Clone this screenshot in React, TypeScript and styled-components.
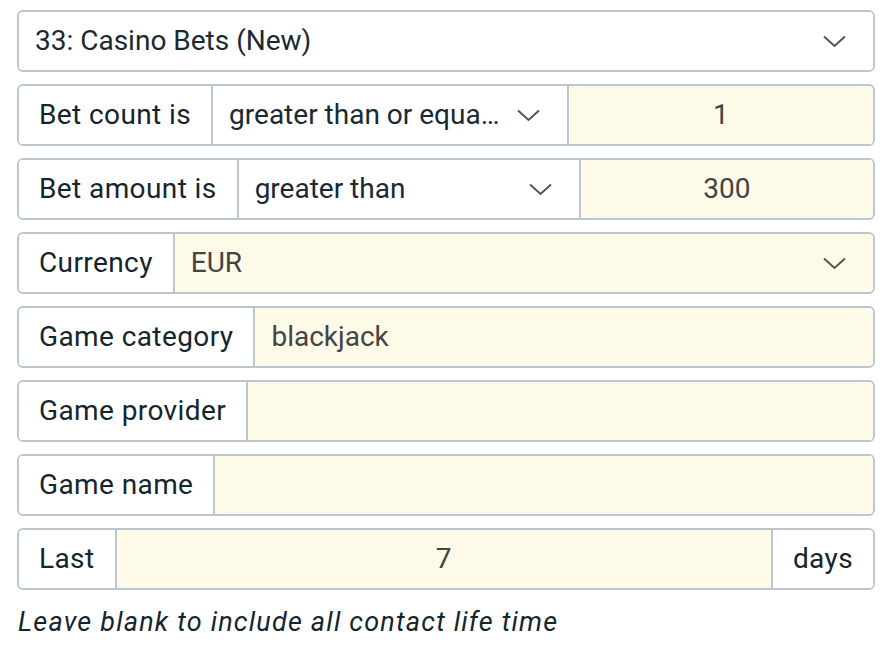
import React from "react";
import styled, { createGlobalStyle } from "styled-components";

const Global = createGlobalStyle`
  html, body { margin: 0; padding: 0; background: #fff; }
  body { font-family: Roboto, "Liberation Sans", sans-serif; }
  * { box-sizing: border-box; }
`;

const Page = styled.div`
  padding: 10px 15px 0 17px;
  display: flex;
  flex-direction: column;
  gap: 12px;
`;

const Row = styled.div`
  display: flex;
  height: 62px;
  border: 2px solid #bcc6ce;
  border-radius: 6px;
  overflow: hidden;
  font-size: 28px;
  line-height: 1.3;
`;

const Label = styled.div`
  flex: none;
  display: flex;
  align-items: center;
  padding: 0 20px;
  background: #fff;
  color: #15252e;
  letter-spacing: 0.4px;
  white-space: nowrap;
  border-right: 2px solid #bcc6ce;
`;

const Suffix = styled(Label)`
  border-right: none;
  border-left: 2px solid #bcc6ce;
`;

const Select = styled.div<{ $grow?: number; $fill?: boolean }>`
  flex: ${(p) => p.$grow ?? 1} 1 0;
  min-width: 0;
  display: flex;
  align-items: center;
  gap: 16px;
  padding: 0 27px 0 16px;
  background: ${(p) => (p.$fill ? "#fdfae8" : "#fff")};
  color: ${(p) => (p.$fill ? "#444" : "#2a2a2a")};
  border-right: ${(p) => (p.$fill ? "none" : "2px solid #bcc6ce")};
  &:last-child { border-right: none; }
`;

const SelectText = styled.span<{ $dark?: boolean }>`
  flex: 1;
  min-width: 0;
  overflow: hidden;
  white-space: nowrap;
  text-overflow: ellipsis;
  color: ${(p) => (p.$dark ? "#1a2a33" : "inherit")};
`;

const Input = styled.div<{ $center?: boolean }>`
  flex: 1 1 0;
  min-width: 0;
  display: flex;
  align-items: center;
  justify-content: ${(p) => (p.$center ? "center" : "flex-start")};
  padding: 0 16px;
  background: #fdfae8;
  color: #444;
  white-space: nowrap;
`;

const Hint = styled.p`
  margin: 4px 0 0 1px;
  font-size: 27px;
  letter-spacing: 1.2px;
  font-style: italic;
  color: #15252e;
`;

const Chevron = () => (
  <svg width="23" height="13" viewBox="0 0 23 13" fill="none">
    <path d="M1 1.5 L11.5 11 L22 1.5" stroke="#555" strokeWidth="2" />
  </svg>
);

export default function App() {
  return (
    <>
      <Global />
      <Page>
        <Row>
          <Select>
            <SelectText $dark>33: Casino Bets (New)</SelectText>
            <Chevron />
          </Select>
        </Row>
        <Row>
          <Label>Bet count is</Label>
          <Select $grow={1.14}>
            <SelectText $dark>greater than or equal to</SelectText>
            <Chevron />
          </Select>
          <Input $center>1</Input>
        </Row>
        <Row>
          <Label>Bet amount is</Label>
          <Select $grow={1.14}>
            <SelectText $dark>greater than</SelectText>
            <Chevron />
          </Select>
          <Input $center>300</Input>
        </Row>
        <Row>
          <Label>Currency</Label>
          <Select $fill>
            <SelectText>EUR</SelectText>
            <Chevron />
          </Select>
        </Row>
        <Row>
          <Label>Game category</Label>
          <Input>blackjack</Input>
        </Row>
        <Row>
          <Label>Game provider</Label>
          <Input></Input>
        </Row>
        <Row>
          <Label>Game name</Label>
          <Input></Input>
        </Row>
        <Row>
          <Label>Last</Label>
          <Input $center>7</Input>
          <Suffix>days</Suffix>
        </Row>
        <Hint>Leave blank to include all contact life time</Hint>
      </Page>
    </>
  );
}
